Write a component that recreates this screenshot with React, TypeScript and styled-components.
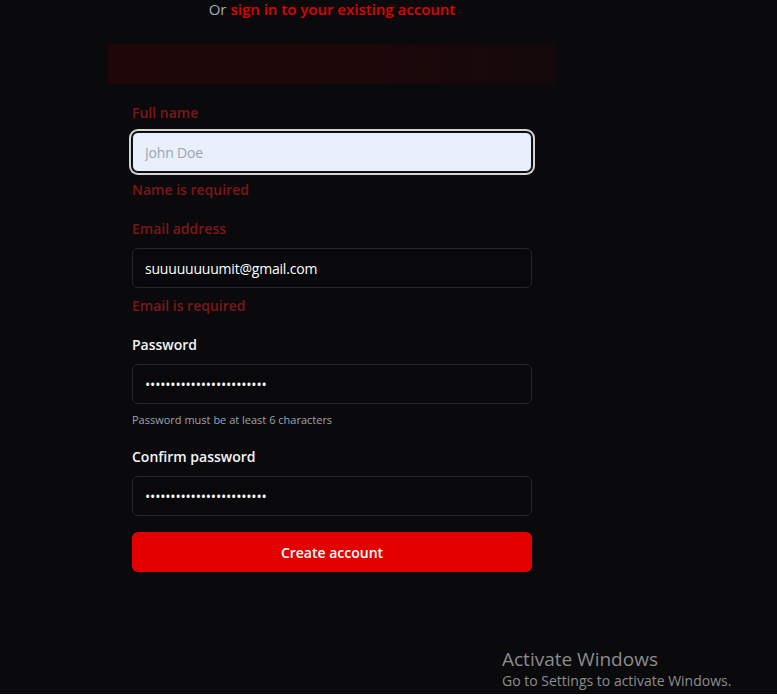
import React from "react";
import styled, { createGlobalStyle, css } from "styled-components";

const Global = createGlobalStyle`
  html, body { margin: 0; padding: 0; background: #ffffff; }
  body { font-family: "Open Sans", "Noto Sans", "Liberation Sans", sans-serif; }
  * { box-sizing: border-box; }
`;

const Page = styled.div`
  position: relative;
  height: 694px;
  background: #0a0a0d;
  overflow: hidden;
`;

const Column = styled.div`
  width: 448px;
  margin-left: 108px;
  display: flex;
  flex-direction: column;
`;

const SignInLine = styled.p`
  margin: 0;
  text-align: center;
  font-size: 15px;
  line-height: 18px;
  color: #a3adbf;
`;

const SignInLink = styled.a`
  color: #e00000;
  font-weight: 600;
  text-decoration: none;
`;

const AlertBand = styled.div`
  margin-top: 26px;
  height: 40px;
  background: linear-gradient(90deg, #1f0709 0%, #1c0709 60%, #14090a 100%);
`;

const Form = styled.form`
  padding: 19px 24px 0;
  display: flex;
  flex-direction: column;
`;

const Field = styled.div<{ $gap?: number }>`
  display: flex;
  flex-direction: column;
  margin-bottom: ${(p) => p.$gap ?? 19}px;
`;

const Label = styled.label<{ $error?: boolean }>`
  font-size: 14px;
  line-height: 20px;
  font-weight: 600;
  color: ${(p) => (p.$error ? "#7d1717" : "#f5f5f5")};
  margin-bottom: 9px;
`;

const Input = styled.input<{ $focused?: boolean }>`
  height: 40px;
  width: 100%;
  border-radius: 6px;
  border: 1px solid #26262b;
  background: #09090b;
  color: #ffffff;
  padding: 0 12px;
  font-family: inherit;
  font-size: 14px;
  letter-spacing: -0.2px;
  outline: none;
  ${(p) =>
    p.$focused &&
    css`
      background: #e8f0fe;
      border-color: #111114;
      color: #111;
      caret-color: #000;
      box-shadow: 0 0 0 1px #0a0a0d, 0 0 0 3px #d6d6d6;
    `}
  &::placeholder {
    color: #a0a4ab;
  }
`;

const Message = styled.p<{ $tone: "error" | "hint" }>`
  margin: 8px 0 0;
  ${(p) =>
    p.$tone === "error"
      ? css`
          font-size: 14px;
          line-height: 20px;
          font-weight: 600;
          color: #7d1717;
        `
      : css`
          font-size: 11px;
          line-height: 16px;
          color: #9ca3af;
        `}
`;

const SubmitButton = styled.button`
  margin-top: -3px;
  height: 40px;
  width: 100%;
  border: none;
  border-radius: 6px;
  background: #e50000;
  color: #ffffff;
  font-family: inherit;
  font-size: 14px;
  font-weight: 600;
`;

const Watermark = styled.div`
  position: absolute;
  left: 502px;
  top: 647px;
  color: #8c8c8c;
  font-family: "Open Sans", "Noto Sans", sans-serif;
`;

const WatermarkTitle = styled.div`
  font-size: 19px;
  line-height: 24px;
`;

const WatermarkSub = styled.div`
  font-size: 14px;
  line-height: 20px;
`;

const PASSWORD = "passwordpassword12345678";

export default function App() {
  return (
    <>
      <Global />
      <Page>
        <Column>
          <SignInLine>
            Or <SignInLink href="#">sign in to your existing account</SignInLink>
          </SignInLine>
          <AlertBand />
          <Form onSubmit={(e) => e.preventDefault()}>
            <Field>
              <Label $error>Full name</Label>
              <Input $focused placeholder="John Doe" autoFocus />
              <Message $tone="error">Name is required</Message>
            </Field>
            <Field>
              <Label $error>Email address</Label>
              <Input type="email" defaultValue="suuuuuuuumit@gmail.com" />
              <Message $tone="error">Email is required</Message>
            </Field>
            <Field>
              <Label>Password</Label>
              <Input type="password" defaultValue={PASSWORD} />
              <Message $tone="hint">Password must be at least 6 characters</Message>
            </Field>
            <Field>
              <Label>Confirm password</Label>
              <Input type="password" defaultValue={PASSWORD} />
            </Field>
            <SubmitButton type="submit">Create account</SubmitButton>
          </Form>
        </Column>
        <Watermark>
          <WatermarkTitle>Activate Windows</WatermarkTitle>
          <WatermarkSub>Go to Settings to activate Windows.</WatermarkSub>
        </Watermark>
      </Page>
    </>
  );
}
